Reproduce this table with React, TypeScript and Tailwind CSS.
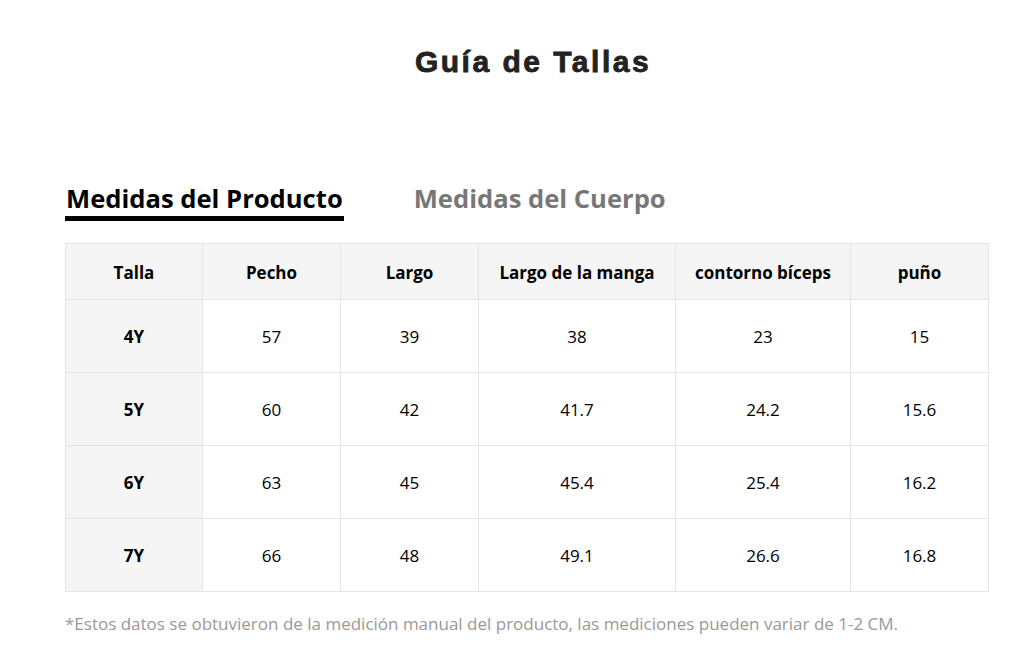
import React from "react";

const headers = ["Talla", "Pecho", "Largo", "Largo de la manga", "contorno bíceps", "puño"];
const rows = [
  ["4Y", "57", "39", "38", "23", "15"],
  ["5Y", "60", "42", "41.7", "24.2", "15.6"],
  ["6Y", "63", "45", "45.4", "25.4", "16.2"],
  ["7Y", "66", "48", "49.1", "26.6", "16.8"],
];
const widths = ["w-[137px]", "w-[138px]", "w-[138px]", "w-[197px]", "w-[175px]", "w-[138px]"];

export default function App() {
  return (
    <div className="w-[1028px] h-[668px] bg-white" style={{ fontFamily: '"Open Sans", "Noto Sans", sans-serif' }}>
      <div className="pt-[43px] flex justify-center pl-[38px]">
        <h1
          className="text-[30px] font-bold text-[#222] leading-[38px] tracking-[2.5px] [-webkit-text-stroke:0.8px_#222]"
          style={{ fontFamily: '"Liberation Sans", Arial, sans-serif' }}
        >
          Guía de Tallas
        </h1>
      </div>
      <div className="ml-[65px] mt-[100px] flex items-start gap-[70px]">
        <div className="flex flex-col">
          <span className="text-[25.6px] font-bold text-black leading-[35px] px-[1px]">Medidas del Producto</span>
          <div className="h-[5px] bg-black" />
        </div>
        <span className="text-[25.6px] font-bold text-[#777] leading-[35px]">Medidas del Cuerpo</span>
      </div>
      <div className="ml-[65px] mt-[22px] w-[924px]">
        <table className="border-collapse table-fixed w-[924px]">
          <thead>
            <tr className="h-[56px] bg-[#f5f5f5]">
              {headers.map((h, i) => (
                <th key={i} className={`${widths[i]} border border-[#e5e5e5] text-[17px] font-bold text-black text-center pt-[2px]`}>
                  {h}
                </th>
              ))}
            </tr>
          </thead>
          <tbody>
            {rows.map((r, ri) => (
              <tr key={ri} className="h-[73px]">
                {r.map((c, ci) => (
                  <td
                    key={ci}
                    className={
                      ci === 0
                        ? "border border-[#e5e5e5] bg-[#f5f5f5] text-[17px] font-bold text-black text-center pt-[1px]"
                        : "border border-[#e5e5e5] text-[17px] text-black text-center pt-[1px]"
                    }
                  >
                    {c}
                  </td>
                ))}
              </tr>
            ))}
          </tbody>
        </table>
        <p className="mt-[19px] text-[17px] text-[#999] leading-[26px]">
          *Estos datos se obtuvieron de la medición manual del producto, las mediciones pueden variar de 1-2 CM.
        </p>
      </div>
    </div>
  );
}
